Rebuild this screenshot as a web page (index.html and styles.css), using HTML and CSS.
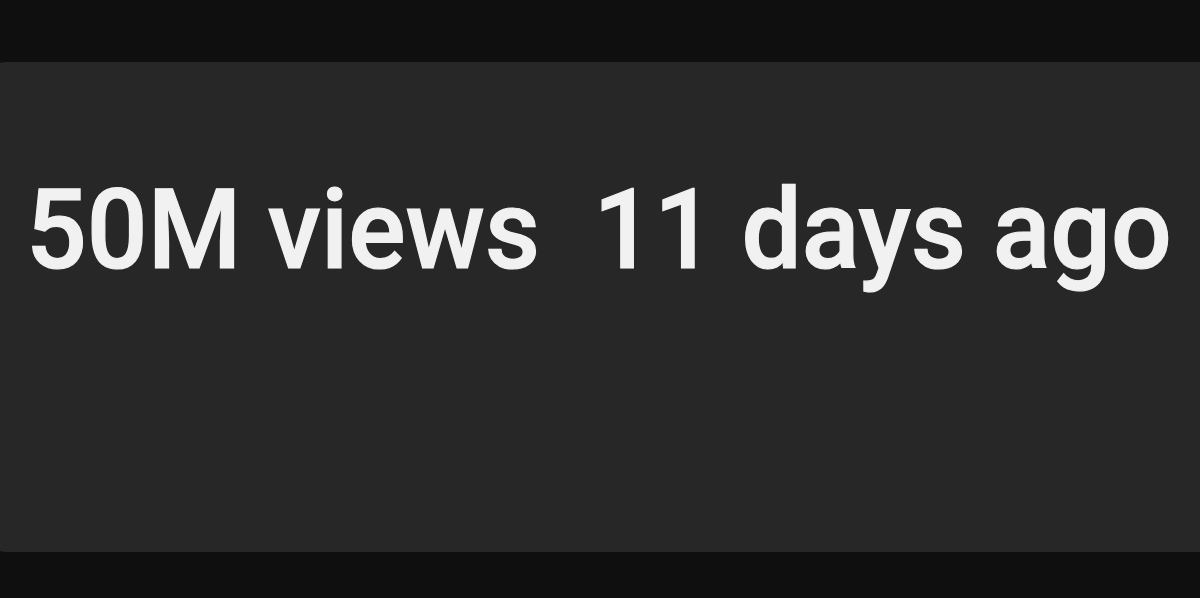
FILE: index.html
```html
<!DOCTYPE html>
<html>
	<head>
		<meta charset="utf-8">
		<title>Video info</title>
		<link rel="stylesheet" href="styles.css">
	</head>
	<body>
		<div class="card">
			<span class="meta">50M views&nbsp; 11 days ago</span>
		</div>
	</body>
</html>
```

FILE: styles.css
```css
html, body {
	height: 100%;
	width: 100%;
}
body {
	margin: 0;
	background-color: #0f0f0f;
	overflow: hidden;
	font-family: Roboto, "Liberation Sans", sans-serif;
}
.card {
	margin-top: 62px;
	margin-left: -12px;
	height: 490px;
	box-sizing: border-box;
	padding: 103px 0 0 38px;
	background-color: #272727;
	border-radius: 18px 0 0 18px;
}
.meta {
	display: inline-block;
	font-size: 111px;
	font-weight: 500;
	line-height: 130px;
	color: #f1f1f1;
	white-space: nowrap;
	transform: scaleX(0.964);
	transform-origin: left top;
	-webkit-text-stroke: 1.2px #f1f1f1;
}
```
